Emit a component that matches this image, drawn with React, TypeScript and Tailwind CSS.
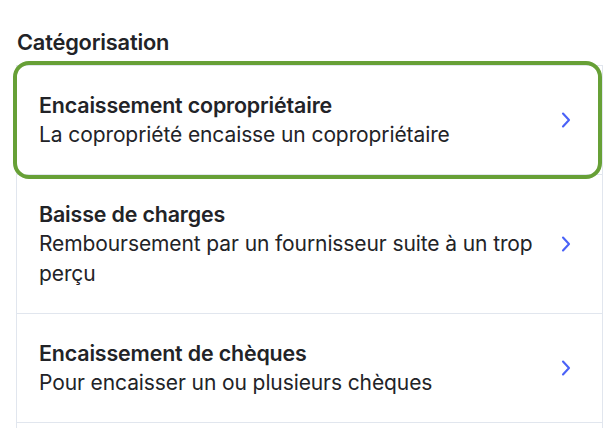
import React from "react";

const items = [
  {
    title: "Encaissement copropriétaire",
    subtitle: "La copropriété encaisse un copropriétaire",
    selected: true,
  },
  {
    title: "Baisse de charges",
    subtitle: "Remboursement par un fournisseur suite à un trop perçu",
    selected: false,
  },
  {
    title: "Encaissement de chèques",
    subtitle: "Pour encaisser un ou plusieurs chèques",
    selected: false,
  },
];

function Chevron() {
  return (
    <svg width="10" height="16" viewBox="0 0 10 16" fill="none" className="shrink-0">
      <polyline
        points="2,1.5 8,8 2,14.5"
        stroke="#4a62f7"
        strokeWidth="2.1"
        strokeLinecap="round"
        strokeLinejoin="round"
      />
    </svg>
  );
}

export default function App() {
  return (
    <div
      className="h-[428px] w-[612px] overflow-hidden bg-white pl-4 pr-[9px] pt-[28px] text-[#222327]"
      style={{ fontFamily: "Inter, 'Noto Sans', sans-serif" }}
    >
      <h2 className="mb-[9px] pl-[1px] text-[21.8px] font-semibold leading-[28px] tracking-[-0.2px]">
        Catégorisation
      </h2>
      <div className="border-x border-t border-[#e1e6ee]">
        {items.map((it) => (
          <div
            key={it.title}
            className="relative flex items-center gap-4 border-b border-[#e1e6ee] py-[24px] pl-[22px] pr-[31px]"
          >
            <div className="flex-1">
              <div className="text-[21.4px] font-semibold leading-[30px] tracking-[-0.15px]">{it.title}</div>
              <div className="text-[21px] leading-[30px] tracking-[-0.1px]">{it.subtitle}</div>
            </div>
            <Chevron />
            {it.selected && (
              <div className="pointer-events-none absolute -bottom-[5px] -left-[4px] -top-[5px] right-0 rounded-[16px] border-4 border-[#67a036]" />
            )}
          </div>
        ))}
        <div className="h-[6px]" />
      </div>
    </div>
  );
}
